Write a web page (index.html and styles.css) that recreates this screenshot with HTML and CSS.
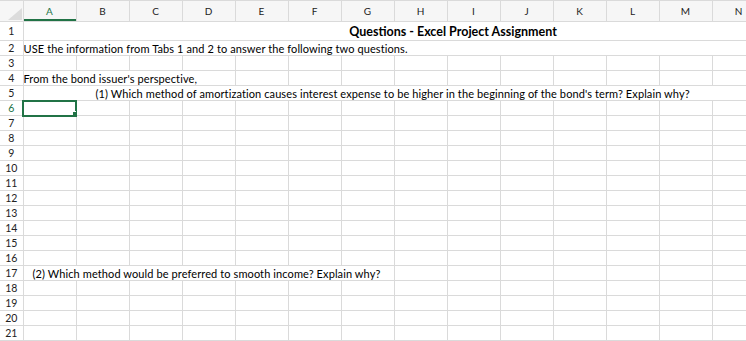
FILE: index.html
```html
<!DOCTYPE html>
<html lang="en">
<head>
    <meta charset="UTF-8">
    <meta name="viewport" content="width=device-width, initial-scale=1.0">
    <title>Questions - Excel Project Assignment</title>
    <link rel="stylesheet" href="styles.css">
</head>
<body>
    <table class="sheet">
        <colgroup>
            <col class="rh">
            <col span="14" class="col">
        </colgroup>
        <thead>
            <tr>
                <th class="corner"><svg width="14" height="12" viewBox="0 0 14 12"><polygon points="14,0 14,12 0,12" fill="#dcdcdc"/></svg></th>
                <th class="active">A</th><th>B</th><th>C</th><th>D</th><th>E</th><th>F</th><th>G</th>
                <th>H</th><th>I</th><th>J</th><th>K</th><th>L</th><th>M</th><th>N</th>
            </tr>
        </thead>
        <tbody>
            <tr class="tall"><th>1</th><td colspan="14" class="title">Questions - Excel Project Assignment</td></tr>
            <tr><th>2</th><td colspan="14">USE the information from Tabs 1 and 2 to answer the following two questions.</td></tr>
            <tr><th>3</th><td></td><td></td><td></td><td></td><td></td><td></td><td></td><td></td><td></td><td></td><td></td><td></td><td></td><td></td></tr>
            <tr><th>4</th><td colspan="4">From the bond issuer's perspective,</td><td></td><td></td><td></td><td></td><td></td><td></td><td></td><td></td><td></td><td></td></tr>
            <tr><th>5</th><td colspan="14" class="indent-1">(1) Which method of amortization causes interest expense to be higher in the beginning of the bond's term? Explain why?</td></tr>
            <tr><th class="active">6</th><td class="selected"></td><td></td><td></td><td></td><td></td><td></td><td></td><td></td><td></td><td></td><td></td><td></td><td></td><td></td></tr>
            <tr><th>7</th><td></td><td></td><td></td><td></td><td></td><td></td><td></td><td></td><td></td><td></td><td></td><td></td><td></td><td></td></tr>
            <tr><th>8</th><td></td><td></td><td></td><td></td><td></td><td></td><td></td><td></td><td></td><td></td><td></td><td></td><td></td><td></td></tr>
            <tr><th>9</th><td></td><td></td><td></td><td></td><td></td><td></td><td></td><td></td><td></td><td></td><td></td><td></td><td></td><td></td></tr>
            <tr><th>10</th><td></td><td></td><td></td><td></td><td></td><td></td><td></td><td></td><td></td><td></td><td></td><td></td><td></td><td></td></tr>
            <tr><th>11</th><td></td><td></td><td></td><td></td><td></td><td></td><td></td><td></td><td></td><td></td><td></td><td></td><td></td><td></td></tr>
            <tr><th>12</th><td></td><td></td><td></td><td></td><td></td><td></td><td></td><td></td><td></td><td></td><td></td><td></td><td></td><td></td></tr>
            <tr><th>13</th><td></td><td></td><td></td><td></td><td></td><td></td><td></td><td></td><td></td><td></td><td></td><td></td><td></td><td></td></tr>
            <tr><th>14</th><td></td><td></td><td></td><td></td><td></td><td></td><td></td><td></td><td></td><td></td><td></td><td></td><td></td><td></td></tr>
            <tr><th>15</th><td></td><td></td><td></td><td></td><td></td><td></td><td></td><td></td><td></td><td></td><td></td><td></td><td></td><td></td></tr>
            <tr><th>16</th><td></td><td></td><td></td><td></td><td></td><td></td><td></td><td></td><td></td><td></td><td></td><td></td><td></td><td></td></tr>
            <tr><th>17</th><td colspan="7" class="indent-2">(2) Which method would be preferred to smooth income? Explain why?</td><td></td><td></td><td></td><td></td><td></td><td></td><td></td></tr>
            <tr><th>18</th><td></td><td></td><td></td><td></td><td></td><td></td><td></td><td></td><td></td><td></td><td></td><td></td><td></td><td></td></tr>
            <tr><th>19</th><td></td><td></td><td></td><td></td><td></td><td></td><td></td><td></td><td></td><td></td><td></td><td></td><td></td><td></td></tr>
            <tr><th>20</th><td></td><td></td><td></td><td></td><td></td><td></td><td></td><td></td><td></td><td></td><td></td><td></td><td></td><td></td></tr>
            <tr><th>21</th><td></td><td></td><td></td><td></td><td></td><td></td><td></td><td></td><td></td><td></td><td></td><td></td><td></td><td></td></tr>
        </tbody>
    </table>
</body>
</html>
```

FILE: styles.css
```css
body { margin: 0; padding: 0; background-color: #fff; font-family: Lato, "Open Sans", sans-serif; overflow: hidden; }
.sheet { border-collapse: collapse; table-layout: fixed; width: 765px; }
.sheet col.rh { width: 23px; }
.sheet col.col { width: 53px; }
.sheet th, .sheet td { padding: 0; border: 1px solid #dadada; white-space: nowrap; overflow: hidden; }
.sheet tr > :first-child { border-left: 0; }
thead th { height: 20px; border-top: 0; border-bottom-color: #c8c8c8; background-color: #f6f6f6; font-size: 10px; font-weight: normal; color: #222; text-align: center; }
thead th.active { color: #217346; box-shadow: inset 0 -2px 0 #217346; }
.corner { position: relative; }
.corner svg { position: absolute; right: 1px; bottom: 1px; }
tbody tr { height: 15px; }
tbody tr.tall { height: 19px; }
tbody th { border-right-color: #c8c8c8; font-size: 10.5px; font-weight: normal; color: #222; text-align: center; }
tbody th.active { color: #217346; }
td { padding-left: 2px; font-size: 11px; letter-spacing: 0.1px; line-height: 13px; color: #000; text-align: left; }
td.title { padding-left: 118px; text-align: center; font-size: 12.5px; letter-spacing: 0; font-weight: bold; }
td.indent-1 { padding-left: 72px; }
td.indent-2 { padding-left: 9px; }
td.selected { position: relative; outline: 2px solid #217346; outline-offset: -1px; }
td.selected::after { content: ""; position: absolute; right: -3px; bottom: -3px; width: 5px; height: 5px; background-color: #217346; border: 1px solid #fff; }
```
